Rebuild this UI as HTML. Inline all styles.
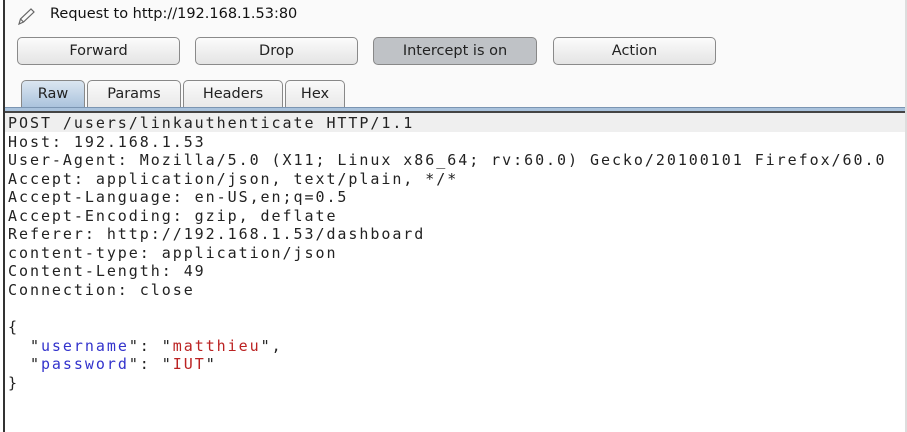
<!DOCTYPE html>
<html><head><style>
*{margin:0;padding:0;box-sizing:border-box}
body{width:907px;height:432px;background:#fff;position:relative;overflow:hidden;font-family:"DejaVu Sans","Liberation Sans",sans-serif}
.left{position:absolute;left:3px;top:0;width:2px;height:432px;background:#333}
.top{position:absolute;left:5px;top:0;width:900px;height:107px;background:#fafafa}
.title{position:absolute;left:50px;top:6px;font-size:14.5px;color:#111}
.btn{position:absolute;top:37px;height:28px;border:1px solid #8a8a8a;border-radius:5px;background:linear-gradient(#fbfbfb,#e4e4e4);font-size:14.5px;color:#222;text-align:center;line-height:26px}
.tab{position:absolute;top:80px;height:28px;border:1px solid #888;border-bottom:none;border-radius:5px 5px 0 0;background:linear-gradient(#fafafa,#e8e8e8);font-size:14.5px;color:#222;text-align:center;line-height:27px}
.bar{position:absolute;left:5px;top:107px;width:900px;height:6px;background:#a9c2dc;border-top:1px solid #7b95b2;border-bottom:2px solid #444}
.cur{position:absolute;left:5px;top:113px;width:900px;height:19px;background:#efefef}
pre{position:absolute;left:8px;top:114px;font-family:"DejaVu Sans Mono","Liberation Mono",monospace;font-size:15px;line-height:18.55px;color:#222;letter-spacing:1.95px}
.k{color:#3333cc}.v{color:#bb2222}
.right{position:absolute;left:905px;top:0;width:2px;height:432px;background:#ddd}
</style></head><body>
<div class="top"></div>
<div class="left"></div>
<svg style="position:absolute;left:16px;top:7px" width="22" height="20" viewBox="0 0 22 20"><path d="M3 17 L4.5 12 L15 2 L18 5 L7.5 15 Z M4.5 12 L7.5 15" fill="none" stroke="#666" stroke-width="1.2"/></svg>
<div class="title">Request to http://192.168.1.53:80</div>
<div class="btn" style="left:17px;width:163px">Forward</div>
<div class="btn" style="left:195px;width:163px">Drop</div>
<div class="btn" style="left:373px;width:164px;background:#bfc2c6;border-color:#888">Intercept is on</div>
<div class="btn" style="left:553px;width:163px">Action</div>
<div class="tab" style="left:21px;width:64px;background:linear-gradient(#dbe6f1,#a9c2dc)">Raw</div>
<div class="tab" style="left:87px;width:94px">Params</div>
<div class="tab" style="left:183px;width:100px">Headers</div>
<div class="tab" style="left:285px;width:60px">Hex</div>
<div class="bar"></div>
<div class="cur"></div>
<pre>POST /users/linkauthenticate HTTP/1.1
Host: 192.168.1.53
User-Agent: Mozilla/5.0 (X11; Linux x86_64; rv:60.0) Gecko/20100101 Firefox/60.0
Accept: application/json, text/plain, */*
Accept-Language: en-US,en;q=0.5
Accept-Encoding: gzip, deflate
Referer: http://192.168.1.53/dashboard
content-type: application/json
Content-Length: 49
Connection: close

{
  "<span class="k">username</span>": "<span class="v">matthieu</span>",
  "<span class="k">password</span>": "<span class="v">IUT</span>"
}</pre>
<div class="right"></div>
</body></html>
